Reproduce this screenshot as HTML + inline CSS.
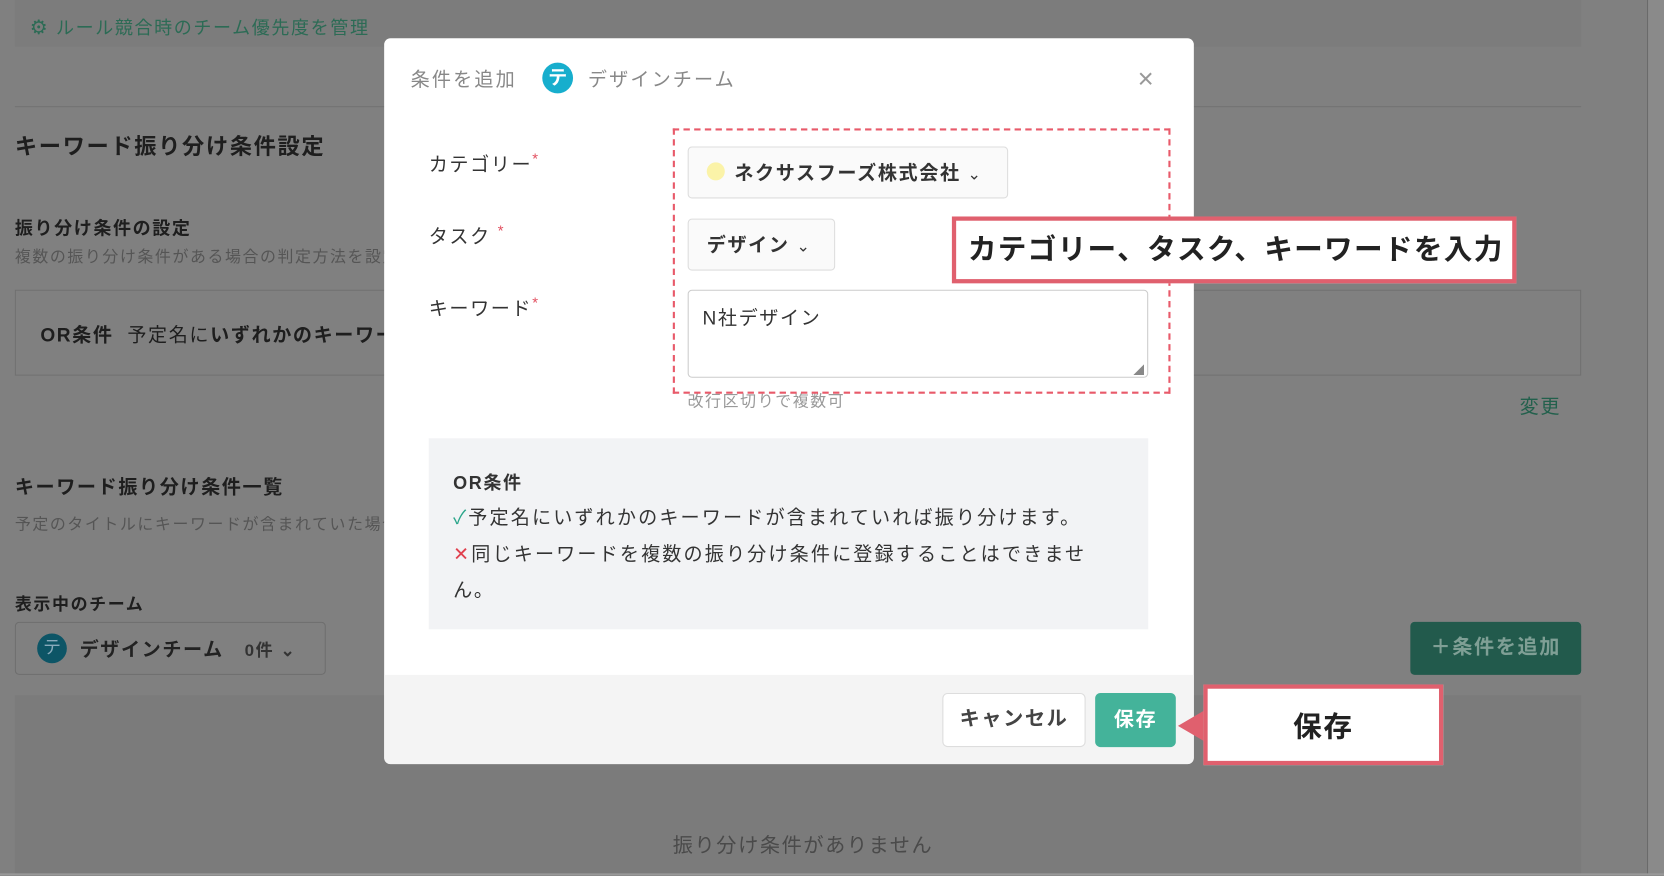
<!DOCTYPE html>
<html><head><meta charset="utf-8"><style>
*{box-sizing:border-box;margin:0;padding:0}
body{width:1664px;height:875px;overflow:hidden;background:#808080;font-family:"Liberation Sans","Noto Sans CJK JP",sans-serif}
#w{position:absolute;left:0;top:0;width:1568px;height:825px;transform:scale(1.0612);transform-origin:0 0;background:#808080}
.a{position:absolute;white-space:nowrap;letter-spacing:1.5px}
.b{font-weight:bold}
</style></head><body><div id="w">
<div class="a" style="left:1552px;top:0;width:16px;height:825px;background:#8a8a8a;border-left:1px solid #6a6a6a"></div>
<div class="a" style="left:14px;top:0;width:1476px;height:44px;background:#7c7c7c"></div>
<div class="a" style="left:28px;top:12px;color:#2c6b55;font-size:17px"><span style="font-size:19px">⚙</span> ルール競合時のチーム優先度を管理</div>
<div class="a" style="left:14px;top:100px;width:1476px;height:1px;background:#727272"></div>
<div class="a b" style="left:14px;top:122px;font-size:21px;color:#1e1e1e">キーワード振り分け条件設定</div>
<div class="a b" style="left:14px;top:201px;font-size:17px;color:#1e1e1e">振り分け条件の設定</div>
<div class="a" style="left:14px;top:231px;font-size:15px;color:#555">複数の振り分け条件がある場合の判定方法を設定</div>
<div class="a" style="left:14px;top:273px;width:1476px;height:81px;border:1.5px solid #707070"></div>
<div class="a" style="left:38px;top:302px;font-size:18px;color:#1e1e1e"><b>OR条件</b>&nbsp; 予定名に<b>いずれかのキーワード</b></div>
<div class="a" style="left:1432px;top:369px;font-size:18px;color:#22604c">変更</div>
<div class="a b" style="left:14px;top:445px;font-size:18px;color:#1e1e1e">キーワード振り分け条件一覧</div>
<div class="a" style="left:14px;top:483px;font-size:15px;color:#555">予定のタイトルにキーワードが含まれていた場合</div>
<div class="a b" style="left:14px;top:556px;font-size:16px;color:#1e1e1e">表示中のチーム</div>
<div class="a" style="left:14px;top:586px;width:293px;height:50px;border:1.5px solid #6e6e6e;border-radius:4px"></div>
<div class="a" style="left:35px;top:597px;width:28px;height:28px;border-radius:50%;background:#0d5566;color:#8ab;font-size:17px;text-align:center;line-height:28px;letter-spacing:0">テ</div>
<div class="a b" style="left:75px;top:598px;font-size:18px;color:#222">デザインチーム&nbsp;&nbsp; <span style="font-size:16px;color:#333">0件 ⌄</span></div>
<div class="a b" style="left:1329px;top:586px;width:161px;height:50px;background:#225a4c;border-radius:4px;color:#7f9f95;font-size:19px;text-align:center;line-height:50px">＋条件を追加</div>
<div class="a" style="left:14px;top:655px;width:1476px;height:168px;background:#7b7b7b"></div>
<div class="a" style="left:634px;top:782px;font-size:19px;color:#4a4a4a">振り分け条件がありません</div>
<div class="a" style="left:0;top:823px;width:1568px;height:2px;background:#999"></div>

<div class="a" style="left:362px;top:36px;width:763px;height:684px;background:#fff;border-radius:6px;overflow:hidden">
 <div class="a" style="left:0;top:600px;width:763px;height:84px;background:#f4f4f4"></div>
</div>
<div class="a" style="left:387px;top:61px;font-size:18px;color:#888;letter-spacing:2px">条件を追加</div>
<div class="a" style="left:511px;top:59px;width:29px;height:29px;border-radius:50%;background:#17aecd;color:#fff;font-size:18px;text-align:center;line-height:29px;font-weight:bold;letter-spacing:0">テ</div>
<div class="a" style="left:554px;top:61px;font-size:18px;color:#888;letter-spacing:2px">デザインチーム</div>
<div class="a" style="left:1072px;top:58px;font-size:26px;color:#999;line-height:32px">×</div>
<div class="a" style="left:404px;top:141px;font-size:18px;color:#333">カテゴリー<span style="color:#e25060;font-size:14px;vertical-align:top">*</span></div>
<div class="a" style="left:404px;top:209px;font-size:18px;color:#333">タスク <span style="color:#e25060;font-size:14px;vertical-align:top">*</span></div>
<div class="a" style="left:404px;top:277px;font-size:18px;color:#333">キーワード<span style="color:#e25060;font-size:14px;vertical-align:top">*</span></div>
<div class="a" style="left:648px;top:138px;width:302px;height:49px;background:#fafafa;border:1.5px solid #ddd;border-radius:4px"></div>
<div class="a" style="left:666px;top:153px;width:17px;height:17px;border-radius:50%;background:#fbf3a8"></div>
<div class="a b" style="left:692px;top:149px;font-size:18px;color:#333">ネクサスフーズ株式会社 <span style="font-weight:normal;font-size:15px">⌄</span></div>
<div class="a" style="left:648px;top:206px;width:139px;height:49px;background:#fafafa;border:1.5px solid #ddd;border-radius:4px"></div>
<div class="a b" style="left:666px;top:217px;font-size:18px;color:#333">デザイン <span style="font-weight:normal;font-size:15px">⌄</span></div>
<div class="a" style="left:648px;top:273px;width:434px;height:83px;border:1.5px solid #ccc;border-radius:4px"></div>
<div class="a" style="left:662px;top:286px;font-size:18px;color:#333">N社デザイン</div>
<div class="a" style="left:1068px;top:340px;font-size:10px;color:#888">◢</div>
<div class="a" style="left:648px;top:367px;font-size:15px;color:#999">改行区切りで複数可</div>
<div class="a" style="left:634px;top:121px;width:469px;height:250px;border:2.5px dashed #e85a6a"></div>
<div class="a" style="left:404px;top:413px;width:678px;height:180px;background:#f2f3f5"></div>
<div class="a b" style="left:427px;top:441px;font-size:17px;color:#333">OR条件</div>
<div class="a" style="left:427px;top:474px;font-size:18px;color:#333;letter-spacing:2px"><span style="color:#2aa58a">✓</span>予定名にいずれかのキーワードが含まれていれば振り分けます。</div>
<div class="a" style="left:427px;top:508px;font-size:18px;color:#333;letter-spacing:2px"><span style="color:#e0404e">✕</span>同じキーワードを複数の振り分け条件に登録することはできませ</div>
<div class="a" style="left:427px;top:542px;font-size:18px;color:#333">ん。</div>
<div class="a b" style="left:888px;top:653px;width:135px;height:51px;background:#fff;border:1.5px solid #ddd;border-radius:5px;font-size:19px;color:#444;text-align:center;line-height:48px">キャンセル</div>
<div class="a b" style="left:1032px;top:653px;width:76px;height:51px;background:#44b39a;border-radius:5px;font-size:19px;color:#fff;text-align:center;line-height:51px">保存</div>
<div class="a b" style="left:897px;top:204px;width:532px;height:63px;background:#fff;border:4px solid #e0606e;font-size:27px;color:#222;line-height:55px;padding-left:11px;letter-spacing:1.2px">カテゴリー、タスク、キーワードを入力</div>
<div class="a" style="left:1110px;top:670px;width:0;height:0;border-top:14px solid transparent;border-bottom:14px solid transparent;border-right:24px solid #e0606e"></div>
<div class="a b" style="left:1134px;top:645px;width:226px;height:76px;background:#fff;border:4px solid #e0606e;font-size:27px;color:#222;text-align:center;line-height:72px">保存</div>
</div></body></html>
